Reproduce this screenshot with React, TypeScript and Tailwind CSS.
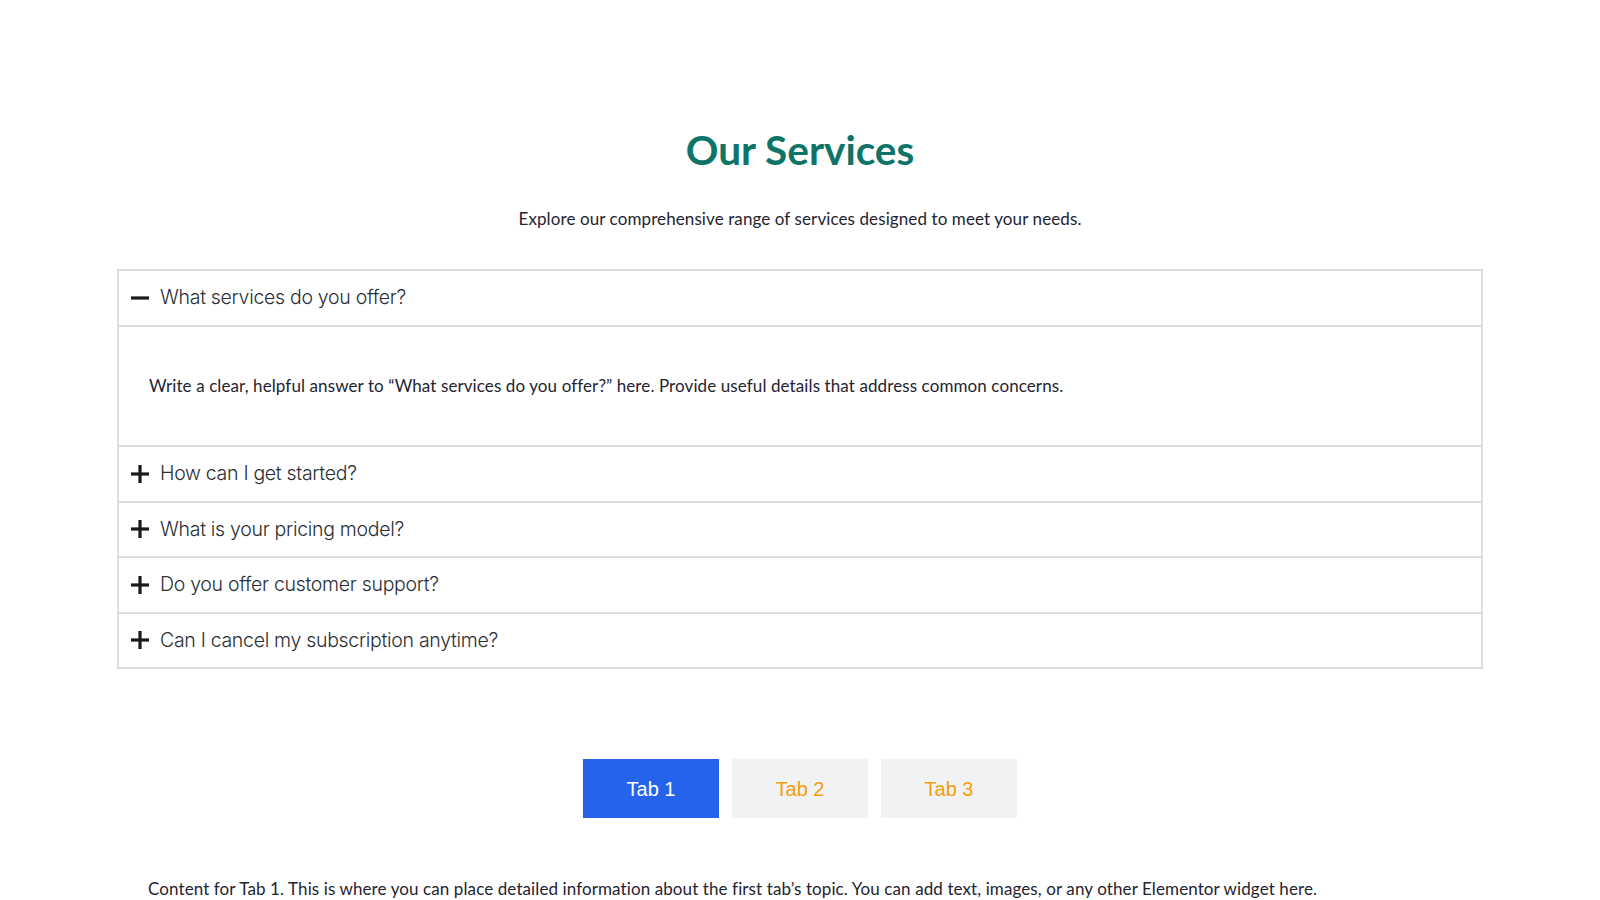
import { useState } from 'react';

const faqs = [
  'What services do you offer?',
  'How can I get started?',
  'What is your pricing model?',
  'Do you offer customer support?',
  'Can I cancel my subscription anytime?',
];

const tabs = ['Tab 1', 'Tab 2', 'Tab 3'];

function Minus() {
  return (
    <svg width="18" height="18" viewBox="0 0 18 18" className="shrink-0">
      <rect x="0" y="7.4" width="18" height="3.2" fill="#1a1a1a" />
    </svg>
  );
}

function Plus() {
  return (
    <svg width="18" height="18" viewBox="0 0 18 18" className="shrink-0">
      <rect x="0" y="7.4" width="18" height="3.2" fill="#1a1a1a" />
      <rect x="7.4" y="0" width="3.2" height="18" fill="#1a1a1a" />
    </svg>
  );
}

export default function App() {
  const [open, setOpen] = useState(0);
  const [tab, setTab] = useState(0);

  return (
    <div className="min-h-screen bg-white font-['Lato',sans-serif] text-[#1f2430]">
      <section className="px-[117px] pt-[126px]">
        <h1 className="text-center text-[40.5px] font-bold leading-[48px] text-[#0e7468]">Our Services</h1>
        <p className="mt-[33px] text-center text-[17px] leading-[24px] tracking-[0.1px]">
          Explore our comprehensive range of services designed to meet your needs.
        </p>

        <div className="mt-[38px] border-2 border-b-0 border-[#dcdee2]">
          {faqs.map((q, i) => (
            <div key={q} className="border-b-2 border-[#dcdee2]">
              <button
                onClick={() => setOpen(open === i ? -1 : i)}
                className="flex h-[53.5px] w-full items-center gap-[11px] pl-[12px] text-left font-['Inter',sans-serif] text-[19.5px] font-light tracking-[-0.3px] text-[#2a2f36]"
              >
                {open === i ? <Minus /> : <Plus />}
                <span>{q}</span>
              </button>
              {open === i && (
                <div className="flex h-[120.5px] items-center border-t-2 border-[#dcdee2] px-[30px] text-[17px] tracking-[0.1px]">
                  Write a clear, helpful answer to “{q}” here. Provide useful details that address common concerns.
                </div>
              )}
            </div>
          ))}
        </div>
      </section>

      <section className="mt-[90px] flex justify-center gap-[13px] font-['Liberation_Sans',sans-serif]">
        {tabs.map((t, i) => (
          <button
            key={t}
            onClick={() => setTab(i)}
            className={
              tab === i
                ? 'h-[59px] w-[136px] bg-[#2563eb] text-[20px] text-white'
                : 'h-[59px] w-[136px] bg-[#f1f2f4] text-[20px] text-[#f59e0b]'
            }
          >
            {t}
          </button>
        ))}
      </section>

      <p className="mt-[59px] pl-[148px] text-[17px] leading-[24px] tracking-[0.1px]">
        Content for {tabs[tab]}. This is where you can place detailed information about the first tab’s topic. You can add
        text, images, or any other Elementor widget here.
      </p>
    </div>
  );
}
